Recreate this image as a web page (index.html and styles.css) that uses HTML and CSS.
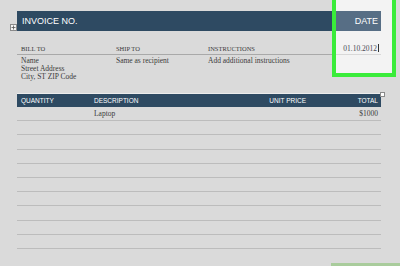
FILE: index.html
```html
<!DOCTYPE html>
<html lang="en">
<head>
    <meta charset="UTF-8">
    <meta name="viewport" content="width=device-width, initial-scale=1.0">
    <title>Invoice</title>
    <link rel="stylesheet" href="styles.css">
</head>
<body>
    <div class="page">
        <div class="highlight"></div>
        <svg class="move-handle" width="7" height="7" viewBox="0 0 7 7">
            <rect x="0.5" y="0.5" width="6" height="6" fill="#f4f4f4" stroke="#8a8a8a"/>
            <path d="M3.5 1.5v4M1.5 3.5h4" stroke="#555" stroke-width="0.8"/>
        </svg>

        <div class="head">
            <div class="title">INVOICE NO.</div>
            <div class="date-head">DATE</div>
        </div>

        <div class="info">
            <div class="label">BILL TO</div>
            <div class="label">SHIP TO</div>
            <div class="label">INSTRUCTIONS</div>
            <div class="spacer"></div>
            <div class="label date-value">01.10.2012<span class="caret"></span></div>

            <div class="text">Name<br>Street Address<br>City, ST ZIP Code</div>
            <div class="text">Same as recipient</div>
            <div class="text">Add additional instructions</div>
            <div></div>
            <div></div>
        </div>

        <div class="items">
            <div class="row header">
                <div>QUANTITY</div>
                <div>DESCRIPTION</div>
                <div class="num">UNIT PRICE</div>
                <div class="num">TOTAL</div>
            </div>
            <span class="resize-handle"></span>
            <div class="row">
                <div></div>
                <div>Laptop</div>
                <div class="num"></div>
                <div class="num">$1000</div>
            </div>
            <div class="row"><div></div><div></div><div></div><div></div></div>
            <div class="row"><div></div><div></div><div></div><div></div></div>
            <div class="row"><div></div><div></div><div></div><div></div></div>
            <div class="row"><div></div><div></div><div></div><div></div></div>
            <div class="row"><div></div><div></div><div></div><div></div></div>
            <div class="row"><div></div><div></div><div></div><div></div></div>
            <div class="row"><div></div><div></div><div></div><div></div></div>
            <div class="row"><div></div><div></div><div></div><div></div></div>
            <div class="row"><div></div><div></div><div></div><div></div></div>
        </div>
    </div>
    <div class="next-highlight"></div>
</body>
</html>
```

FILE: styles.css
```css
body {
    margin: 0;
    background-color: #dadada;
    font-family: "Liberation Serif", serif;
    color: #3a3a3a;
    overflow: hidden;
    height: 266px;
    position: relative;
}

.page {
    position: relative;
    width: 364px;
    margin-left: 17px;
    padding-top: 11px;
}

.page > * {
    position: relative;
    z-index: 1;
}

.page > .highlight {
    position: absolute;
    z-index: 0;
    left: 315px;
    top: -6px;
    width: 64px;
    height: 83px;
    box-sizing: border-box;
    border: 4px solid #3aec3a;
    background-color: #f3f3f3;
}

.page > .move-handle {
    position: absolute;
    left: -7px;
    top: 24px;
}

.head {
    display: flex;
    height: 20px;
    font-family: "Liberation Sans", sans-serif;
    font-size: 9px;
    color: #fff;
}

.title {
    width: 315px;
    background-color: #2e4a62;
    padding-left: 5px;
    line-height: 20px;
    box-sizing: border-box;
}

.date-head {
    margin-left: 4px;
    width: 45px;
    background-color: #576e85;
    text-align: right;
    padding-right: 3px;
    line-height: 20px;
    box-sizing: border-box;
}

.info {
    display: grid;
    grid-template-columns: 95px 92px 128px 4px 45px;
    margin-top: 13px;
}

.label {
    font-size: 6.5px;
    height: 10px;
    line-height: 10px;
    padding-left: 4px;
    border-bottom: 1px solid #a9a9a9;
}

.spacer {
    height: 10px;
}

.date-value {
    font-size: 7.5px;
    color: #4a4a55;
    text-align: right;
    padding-right: 2px;
    border-bottom: 1px solid #d8d8d8;
}

.caret {
    display: inline-block;
    width: 1px;
    height: 8px;
    margin-left: 1px;
    background-color: #333;
    vertical-align: -1px;
}

.text {
    font-size: 7.5px;
    line-height: 8px;
    padding: 2px 0 0 4px;
}

.items {
    margin-top: 12px;
}

.row {
    display: grid;
    grid-template-columns: 73px 139px 80px 72px;
    height: 14.2px;
    box-sizing: border-box;
    border-bottom: 1px solid #bcbcbc;
    font-size: 7.5px;
    line-height: 13px;
}

.row > div {
    padding: 0 4px;
}

.row .num {
    text-align: right;
    padding-right: 3px;
}

.row.header {
    height: 14px;
    background-color: #2e4a62;
    border-top: 1px solid #ececec;
    border-bottom: none;
    font-family: "Liberation Sans", sans-serif;
    font-size: 6.5px;
    line-height: 13px;
    color: #fff;
}

.resize-handle {
    position: absolute;
    right: -4px;
    top: -1px;
    width: 3px;
    height: 3px;
    border: 1px solid #8a8a8a;
    background-color: #fff;
}

.next-highlight {
    position: absolute;
    left: 331px;
    top: 263px;
    width: 69px;
    height: 3px;
    background-color: #a9cc9c;
}
```
